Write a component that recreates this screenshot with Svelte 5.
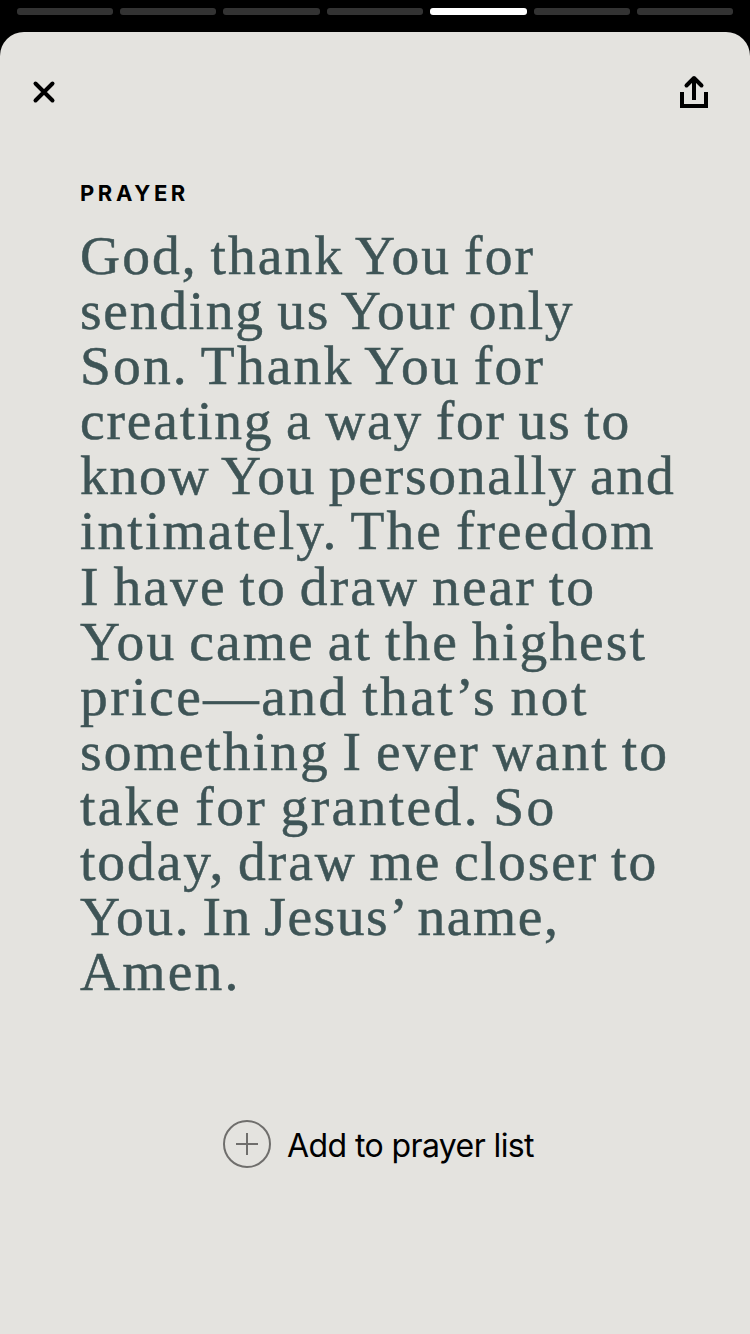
<script>
    const segments = 7;
    const current = 4;

    // letter spacing per line, in px
    const lines = [
        { text: "God, thank You for", spacing: 2.05 },
        { text: "sending us Your only", spacing: 1.73 },
        { text: "Son. Thank You for", spacing: 2.15 },
        { text: "creating a way for us to", spacing: 1.82 },
        { text: "know You personally and", spacing: 1.75 },
        { text: "intimately. The freedom", spacing: 2.1 },
        { text: "I have to draw near to", spacing: 2.08 },
        { text: "You came at the highest", spacing: 2.1 },
        { text: "price—and that’s not", spacing: 2.47 },
        { text: "something I ever want to", spacing: 2.05 },
        { text: "take for granted. So", spacing: 2.4 },
        { text: "today, draw me closer to", spacing: 1.94 },
        { text: "You. In Jesus’ name,", spacing: 1.55 },
        { text: "Amen.", spacing: 2.2 },
    ];
</script>

<div class="story">
    <div class="progress">
        {#each Array(segments) as _, i}
            <span class="segment" class:active={i === current}></span>
        {/each}
    </div>

    <main class="card">
        <header>
            <button aria-label="Close">
                <svg width="24" height="24" viewBox="0 0 24 24">
                    <path d="M3.5 3.5L20.5 20.5M20.5 3.5L3.5 20.5" stroke-width="4" stroke-linecap="round" />
                </svg>
            </button>
            <button aria-label="Share">
                <svg width="30" height="34" viewBox="0 0 30 34">
                    <path d="M3 17V31H27V17" stroke-width="4" />
                    <path d="M15 25V4" stroke-width="4" />
                    <path d="M7.5 10.5L15 3L22.5 10.5" stroke-width="4" stroke-linecap="round" stroke-linejoin="round" />
                </svg>
            </button>
        </header>

        <section>
            <h2>PRAYER</h2>
            <p>
                {#each lines as line}
                    <span class="line" style="letter-spacing: {line.spacing}px">{line.text}</span>
                {/each}
            </p>
        </section>

        <button class="add">
            <svg width="48" height="48" viewBox="0 0 48 48">
                <circle cx="24" cy="24" r="23" stroke-width="2" />
                <path d="M13 24H35M24 13V35" stroke-width="2" />
            </svg>
            <span>Add to prayer list</span>
        </button>
    </main>
</div>

<style>
    :global(body) {
        background: #000;
    }
    .story {
        width: 750px;
        height: 1334px;
        overflow: hidden;
        display: flex;
        flex-direction: column;
        background: #000;
    }
    .progress {
        height: 32px;
        box-sizing: border-box;
        padding: 8px 16.5px 0;
        display: flex;
        gap: 7px;
    }
    .segment {
        flex: 1;
        height: 7px;
        border-radius: 3px;
        background: #333;
    }
    .active {
        background: #fff;
    }
    .card {
        flex: 1;
        display: flex;
        flex-direction: column;
        background: #e4e3df;
        border-radius: 24px 24px 0 0;
    }
    header {
        height: 120px;
        box-sizing: border-box;
        padding: 0 41px 0 32px;
        display: flex;
        align-items: center;
        justify-content: space-between;
    }
    button {
        display: flex;
        padding: 0;
        border: none;
        background: none;
        color: #000;
    }
    svg {
        display: block;
        fill: none;
        stroke: #000;
    }
    section {
        padding: 27px 0 0 80px;
    }
    h2 {
        margin: 0;
        font: 700 22px/28px Inter, sans-serif;
        letter-spacing: 3.6px;
    }
    p {
        margin: 21px 0 0;
        color: #3e5456;
        font: 55.5px/55.1px "Liberation Serif", serif;
        word-spacing: -3px;
        -webkit-text-stroke: 0.5px #3e5456;
    }
    .line {
        display: block;
        white-space: nowrap;
    }
    .add {
        align-self: center;
        align-items: center;
        gap: 16px;
        margin: 120px 0 0 7px;
        font: 32px/46px Inter, sans-serif;
        letter-spacing: -0.6px;
    }
    .add span {
        padding-top: 4px;
    }
    .add svg {
        stroke: #6f6e6c;
    }
</style>
